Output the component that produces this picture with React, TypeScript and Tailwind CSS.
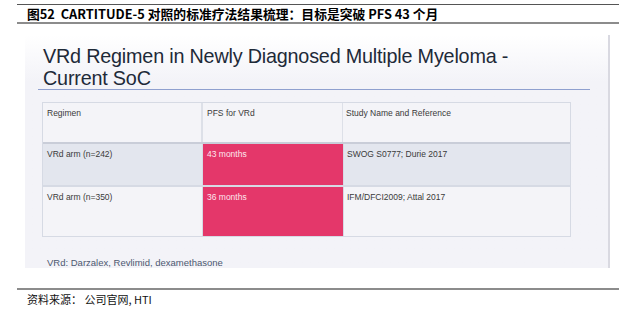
import React from "react";

const rows = [
  { regimen: "VRd arm (n=242)", pfs: "43 months", study: "SWOG S0777; Durie 2017", shade: true, h: "h-[43px]" },
  { regimen: "VRd arm (n=350)", pfs: "36 months", study: "IFM/DFCI2009; Attal 2017", shade: false, h: "h-[49px]" },
];

export default function App() {
  return (
    <div className="w-[634px] h-[316px] bg-white overflow-hidden">
      <div className="ml-[17px] w-[602px]">
        {/* figure caption */}
        <div className="mt-[4px] border-t border-[#555] border-b-2 border-b-[#8c8c8c] h-[20px] flex items-center pl-[10px] font-['Noto_Sans_CJK_SC','Noto_Sans',sans-serif] font-bold text-[12.8px] leading-[17px] text-black">
          图52&nbsp; CARTITUDE-5 对照的标准疗法结果梳理：目标是突破 PFS 43 个月
        </div>

        {/* slide */}
        <div className="mt-[11px] ml-[8px] w-[585px] h-[233px] bg-gradient-to-b from-white to-[#f3f3f8] from-0% to-20% border-r-2 border-[#d9d9e1] pt-[10px] font-['Liberation_Sans',Arial,sans-serif]">
          <div className="ml-[13px] w-[552px] border-b-[1.5px] border-[#8fa0cf] pl-[5px] text-[19.8px] leading-[22px] tracking-[-0.2px] text-[#1e2a38]">
            <div>VRd Regimen in Newly Diagnosed Multiple Myeloma -</div>
            <div>Current SoC</div>
          </div>

          <div className="ml-[17px] mt-[12px] w-[529px] border border-[#d6dae4] text-[8.5px] leading-[11px] text-[#3a3a3a]">
            <div className="flex h-[41px] bg-[#f4f4f8] border-b-2 border-[#c9cdd8]">
              <div className="w-[160px] border-r-2 border-[#dde0e8] pl-[4px] pt-[5px]">Regimen</div>
              <div className="w-[140px] border-r border-[#dde0e8] pl-[4px] pt-[5px]">PFS for VRd</div>
              <div className="flex-1 pl-[3px] pt-[5px]">Study Name and Reference</div>
            </div>
            {rows.map((r, i) => (
              <div
                key={i}
                className={`flex ${r.h} ${r.shade ? "bg-[#e3e6ee]" : "bg-[#f4f4f8]"} ${i === 0 ? "border-b-2 border-[#d6dae4]" : ""}`}
              >
                <div className="w-[160px] border-r border-[#d6dae4] pl-[4px] pt-[5px]">{r.regimen}</div>
                <div className="w-[140px] bg-[#e4376a] text-[#fde6ee] pl-[4px] pt-[5px]">{r.pfs}</div>
                <div className="flex-1 border-l border-[#d6dae4] pl-[3px] pt-[5px]">{r.study}</div>
              </div>
            ))}
          </div>

          <div className="ml-[22px] mt-[19px] text-[9.5px] leading-[13px] text-[#4d5870]">
            VRd: Darzalex, Revlimid, dexamethasone
          </div>
        </div>

        {/* source */}
        <div className="mt-[20px] border-t-2 border-[#8c8c8c] pl-[10px] pt-[1px] font-['Noto_Sans_CJK_SC','Noto_Sans',sans-serif] text-[11px] leading-[16px] text-[#111]">
          资料来源： 公司官网, HTI
        </div>
      </div>
    </div>
  );
}
